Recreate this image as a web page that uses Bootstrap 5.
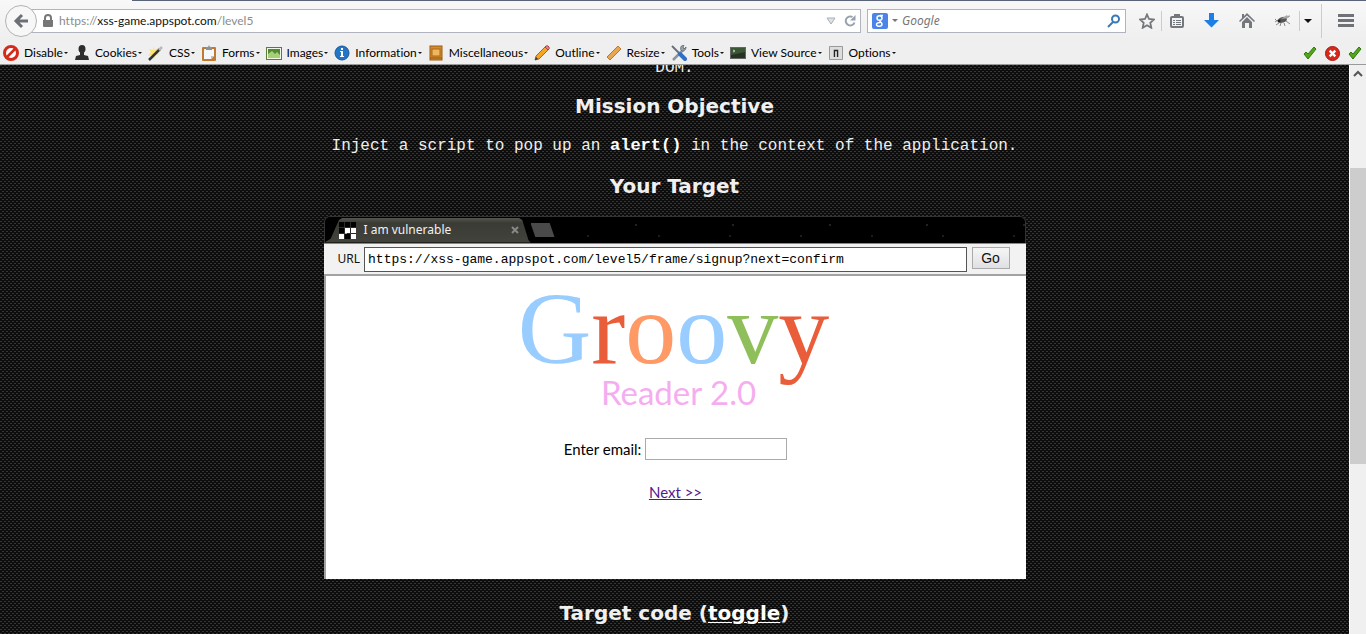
<!DOCTYPE html>
<html lang="en">
<head>
<meta charset="utf-8">
<meta name="viewport" content="width=device-width, initial-scale=1">
<title>XSS game: Level 5</title>
<link href="https://cdn.jsdelivr.net/npm/bootstrap@5.3.0/dist/css/bootstrap.min.css" rel="stylesheet">
<style>
  body { font: 12px/16px "Noto Sans", "Open Sans", sans-serif; color: #111; overflow: hidden; font-variant-ligatures: none; }
  button { font: inherit; color: inherit; }
  svg { display: block; flex: none; }
  .chrome { background: linear-gradient(#f8f8f8, #efefef 60%); border-bottom: 1px solid #9a9a9a; }
  .tab-edge { height: 1px; background: #5b6379; margin-left: 132px; }
  .nav-row { height: 39px; padding-right: 12px; }
  .back-btn { width: 32px; height: 32px; margin-left: 5px; border: 1px solid #b3b3b3; border-radius: 50%; background: #f7f7f7; z-index: 1; }
  .field-box { height: 24px; background: #fff; border: 1px solid #b0b4be; }
  .address { margin-left: -6px; padding-left: 11px; padding-right: 4px; color: #8c8c8c; }
  .address span { font-family: Lato, sans-serif; padding-left: 6px; }
  .address b { font-weight: 400; color: #111; }
  .finder { width: 259px; margin-left: 6px; padding: 0 4px; }
  .finder input { font-style: italic; min-width: 0; outline: 0; }
  .finder input::placeholder { color: #777; }
  .plain { border: 0; background: none; padding: 0; }
  .tools { gap: 20px; margin-left: 13px; }
  .rule { width: 1px; height: 20px; background: #ccc; }
  .rule.tall { height: 34px; }
  .dev-row { height: 24px; padding: 2px 0 0 3px; font-family: Lato, sans-serif; color: #000; }
  .dev-row button { gap: 5px; margin-right: 6px; white-space: nowrap; }
  .drop { display: inline-block; border: 2px solid transparent; border-top-color: #111; border-bottom: 0; margin-left: 1px; vertical-align: 3px; }
  .drop.big { border-width: 4px 4px 0; margin: 0; }
  .drop.soft { border-width: 3px 3px 0; border-top-color: #777; }

  .game { min-height: 0; overflow: hidden; color: #f0f0f0; font: 16px/20px "Liberation Mono", monospace;
    background: #0d0d0d url("data:image/svg+xml,%3Csvg xmlns='http://www.w3.org/2000/svg' width='4' height='4'%3E%3Cpath fill='%23363636' d='M0 0h2v1H0zM2 2h2v1H2z'/%3E%3C/svg%3E"); }
  .game p { margin: 0 0 18px; }
  .game p.cut { margin: -7px 0 16px; }
  .game h2 { font: 700 20px/24px "DejaVu Sans", sans-serif; margin: 0 0 18px; }
  .game h2 a { color: #fff; text-underline-offset: 2px; text-decoration-thickness: 1px; }
  .game p b { font-size: 17px; color: #fff; }
  .frame-box { width: 702px; max-width: 100%; margin-bottom: 18px; color: #111; font: 12px/16px "Noto Sans", sans-serif; }
  .tab-strip { height: 27px; border: 1px solid #333; border-bottom: 0; border-radius: 6px 6px 0 0;
    background: radial-gradient(circle at 20px 8px, #222 1px, transparent 1px) 0 0/97px 27px, radial-gradient(circle at 50px 19px, #1c1c1c 1px, transparent 1px) 0 0/71px 27px, #000; }
  .tab-live { width: 206px; height: 25px; padding: 0 12px 0 14px; color: #f2f2f2; background: linear-gradient(#565650, #3b3b35 20%, #43433d);
    clip-path: polygon(0 100%, 3% 85%, 7% 10%, 9% 0, 94% 0, 96% 10%, 99% 90%, 100% 100%); }
  .tab-new { width: 24px; height: 14px; background: #4a4a4a; clip-path: polygon(0 0, 80% 0, 100% 100%, 20% 100%); }
  .url-row { height: 33px; background: #f2f2f2; border-top: 1px solid #888; border-bottom: 2px solid #a2a2a2; padding: 3px 16px 0 14px; }
  .url-row input { height: 25px; border: 1px solid #555; padding: 0 3px; margin: 0 5px 0 4px; font: 13px "Liberation Mono", monospace; min-width: 0; }
  .go-btn { width: 38px; height: 22px; border: 1px solid #aaa; background: linear-gradient(#f6f6f6, #e0e0e4); font: 14px "Liberation Sans", sans-serif; }
  .reader { height: 303px; background: #fff; border-left: 2px solid #a2a2a2; font: 15px/20px Lato, sans-serif; color: #000; }
  .groovy { font: 102px/100px "Liberation Serif", serif; margin: 0; padding: 3px 4px 0 0; color: #99ccff; }
  .red { color: #e95d3a; } .orange { color: #ff9966; } .green { color: #8fbf5a; }
  .edition { font: 33px/36px Lato, sans-serif; color: #f5adf0; margin-top: -5px; padding-left: 6px; }
  .reader input { width: 142px; height: 22px; border: 1px solid #aaa; }
  .next-link { padding-top: 22px; }
  .reader a { color: #551a8b; }
  .scroller { width: 17px; background: #f0f0f0; border-left: 1px solid #fff; }
  .thumb { height: 52%; margin-top: 86px; background: #cdcdcd; }
</style>
</head>
<body class="vh-100 d-flex flex-column">
<header class="chrome">
  <div class="tab-edge"></div>
  <div class="nav-row d-flex align-items-center">
    <button class="back-btn d-flex align-items-center justify-content-center p-0" aria-label="Back">
      <svg width="16" height="16" viewBox="0 0 16 16" fill="none" stroke="#6c7076" stroke-width="3"><path d="M15 8H3M9 2L3 8l6 6"/></svg>
    </button>
    <div class="field-box address flex-grow-1 d-flex align-items-center">
      <svg width="10" height="13" viewBox="0 0 10 13" fill="#777"><path d="M0 6h10v6a1 1 0 0 1-1 1H1a1 1 0 0 1-1-1z"/><path d="M2 7V4a3 3 0 0 1 6 0v3" fill="none" stroke="#777" stroke-width="2"/></svg>
      <span class="flex-grow-1 text-truncate">https://<b>xss-game.appspot.com</b>/level5</span>
      <svg width="10" height="8" viewBox="0 0 10 8"><path d="M1 1h8L5 7z" fill="#dfe3e8" stroke="#a9afb8"/></svg>
      <button class="plain ms-2" aria-label="Reload"><svg width="12" height="12" viewBox="0 0 12 12"><path d="M10.500 7.500A4.500 4.500 0 1 1 8.500 2" fill="none" stroke="#98a2ae" stroke-width="2"/><path d="M11.500 0v5.500H6z" fill="#98a2ae"/></svg></button>
    </div>
    <div class="field-box finder d-flex align-items-center">
      <svg width="16" height="16" viewBox="0 0 16 16"><rect width="16" height="16" rx="2" fill="#4a84e8"/><g fill="none" stroke="#fff" stroke-width="1.500"><ellipse cx="7.500" cy="5" rx="2.500" ry="2.300"/><path d="M8 2.500h3M8.500 7.500c-2 1 1.500 1.500 1.500 3.500 0 3-5.500 3-5.500 .5 0-2 3-2 4-2"/></g></svg>
      <span class="drop big soft mx-1"></span>
      <input class="plain flex-grow-1" type="text" placeholder="Google" aria-label="Search with Google">
      <button class="plain" aria-label="Search"><svg width="14" height="14" viewBox="0 0 14 14" fill="none" stroke="#3a78b8" stroke-width="2"><circle cx="8.500" cy="5" r="3.500"/><path d="M6 8l-5 5"/></svg></button>
    </div>
    <div class="tools d-flex align-items-center">
      <button class="plain" aria-label="Bookmark"><svg width="16" height="16" viewBox="0 0 16 16"><path d="M8 1.500l2 4.500 5 .5-3.700 3.300 1 5L8 12.300l-4.300 2.500 1-5L1 6.500 6 6z" fill="none" stroke="#74787d" stroke-width="1.800"/></svg></button>
      <button class="plain d-flex align-items-center" style="margin-left:-14px" aria-label="Bookmark list"><span class="rule me-2"></span><svg width="14" height="14" viewBox="0 0 14 14"><rect x="1" y="3" width="12" height="10" rx="1" fill="none" stroke="#74787d" stroke-width="2"/><path d="M4 0h6v4H4zM3 6h2v1H3zM6 6h5v1H6zM3 8h2v1H3zM6 8h5v1H6zM3 10h2v1H3zM6 10h5v1H6z" fill="#74787d"/></svg></button>
      <button class="plain" aria-label="Downloads"><svg width="15" height="15" viewBox="0 0 15 15"><path d="M5 0h5v7h5l-7.500 7.500L0 7h5z" fill="#1c7fe8"/></svg></button>
      <button class="plain" aria-label="Home"><svg width="16" height="15" viewBox="0 0 16 15"><path d="M8 0l8 8-1 1-7-6.500L1 9 0 8l3-3V1h2v2z" fill="#74787d"/><path d="M8 4l5 5v6h-3v-5H6v5H3V9z" fill="#74787d"/></svg></button>
      <button class="plain" aria-label="Firebug"><svg width="16" height="13" viewBox="0 0 16 13"><path d="M2 7L0 5M4 9l-3 2M6 9l-1 3M9 9l1 3M11 7l4 3M10 3l5-1M3 6l-3 2" stroke="#888" fill="none"/><ellipse cx="7.500" cy="6" rx="4.500" ry="2.800" fill="#555" transform="rotate(-18 7 6)"/><path d="M6 5l6-4 2 3z" fill="#aaa"/><circle cx="4" cy="7" r="1.500" fill="#222"/></svg></button>
      <button class="plain d-flex align-items-center" style="margin-left:-12px" aria-label="More"><span class="rule me-1"></span><span class="drop big"></span></button>
      <button class="plain d-flex align-items-center" style="margin-left:-11px" aria-label="Menu"><span class="rule tall me-3"></span><svg width="16" height="13" viewBox="0 0 16 13"><path d="M0 1.500h16M0 6.500h16M0 11.500h16" stroke="#6f7378" stroke-width="3"/></svg></button>
    </div>
  </div>
  <nav class="dev-row d-flex align-items-center">
    <button class="plain d-flex align-items-center"><svg width="16" height="16" viewBox="0 0 16 16"><circle cx="8" cy="8" r="6.500" fill="#fff" stroke="#d42a1c" stroke-width="3"/><path d="M4 12l8-8" stroke="#d42a1c" stroke-width="2.500"/></svg><span>Disable<i class="drop"></i></span></button>
    <button class="plain d-flex align-items-center"><svg width="16" height="16" viewBox="0 0 16 16" fill="#2e2e2e"><ellipse cx="8" cy="4" rx="3.500" ry="4"/><path d="M6 7h4v3l4 1 1 4H1l1-4 4-1z"/></svg><span>Cookies<i class="drop"></i></span></button>
    <button class="plain d-flex align-items-center"><svg width="16" height="16" viewBox="0 0 16 16"><path d="M5 1l1 4 4-2-2 4 3 2-4 1-1 4-2-4-4 1 3-4-2-3 4 1z" fill="#ffe26b"/><path d="M1 15L12 4" stroke="#333" stroke-width="2.500"/><path d="M11 5l3-3" stroke="#b9b9b9" stroke-width="2.500"/></svg><span>CSS<i class="drop"></i></span></button>
    <button class="plain d-flex align-items-center"><svg width="16" height="16" viewBox="0 0 16 16"><rect x="1" y="2" width="14" height="14" rx="1" fill="#c37a2e"/><path d="M3 4h10v7l-3 3H3z" fill="#f5f8fc"/><path d="M10 14v-3h3z" fill="#b6c3d2"/><path d="M5 5V2h2l1-2 1 2h2v3z" fill="#8b929c"/></svg><span>Forms<i class="drop"></i></span></button>
    <button class="plain d-flex align-items-center"><svg width="16" height="16" viewBox="0 0 16 16"><rect x=".5" y="2.500" width="15" height="12" fill="#f2f6e8" stroke="#5c7a3c"/><path d="M2 4h12v9H2z" fill="#4f8a34"/><path d="M2 9l4-3 3 3 2-2 3 3v3H2z" fill="#a8cf76"/></svg><span>Images<i class="drop"></i></span></button>
    <button class="plain d-flex align-items-center"><svg width="16" height="16" viewBox="0 0 16 16"><circle cx="8" cy="8" r="7" fill="#2475c4" stroke="#17599c"/><path d="M7 3h2v2H7zM6 6h3v5h1v1H6v-1h1V7H6z" fill="#fff"/></svg><span>Information<i class="drop"></i></span></button>
    <button class="plain d-flex align-items-center"><svg width="16" height="16" viewBox="0 0 16 16"><rect x="2" y="1" width="12" height="14" fill="#d78a2b" stroke="#9c5c12"/><rect x="4" y="4" width="8" height="7" fill="#efb660" stroke="#a8691c"/><path d="M2 13h12" stroke="#8f5410"/></svg><span>Miscellaneous<i class="drop"></i></span></button>
    <button class="plain d-flex align-items-center"><svg width="16" height="16" viewBox="0 0 16 16"><path d="M1 15l1-4 9-9 3 3-9 9z" fill="#f4a623" stroke="#b5651d"/><path d="M11 2l1-1q2-1 3 1t-1 3z" fill="#e58585" stroke="#a44"/><path d="M1 15l1-3 2 2z" fill="#333"/></svg><span>Outline<i class="drop"></i></span></button>
    <button class="plain d-flex align-items-center"><svg width="16" height="16" viewBox="0 0 16 16"><path d="M1 12L12 1l3 3L4 15z" fill="#e8a552" stroke="#b97a30"/></svg><span>Resize<i class="drop"></i></span></button>
    <button class="plain d-flex align-items-center"><svg width="16" height="16" viewBox="0 0 16 16" fill="none"><path d="M2 15L12 5" stroke="#8b949e" stroke-width="2.500"/><path d="M15 2l-2 2-1-2 1-2c-3 0-4 3-3 5s5 1 5-3z" fill="#9aa4ae" stroke="#66707a"/><path d="M1 1l7 7" stroke="#68717a" stroke-width="2"/><path d="M9 9l5 5" stroke="#2f6fc4" stroke-width="4" stroke-linecap="round"/></svg><span>Tools<i class="drop"></i></span></button>
    <button class="plain d-flex align-items-center"><svg width="16" height="16" viewBox="0 0 16 16"><rect x=".5" y="2.500" width="15" height="11" fill="#243420" stroke="#666"/><path d="M1 3h14v4L1 10z" fill="#3e5638"/><path d="M3 5l2 1-2 1" stroke="#b7d7a8" fill="none"/></svg><span>View Source<i class="drop"></i></span></button>
    <button class="plain d-flex align-items-center"><svg width="16" height="16" viewBox="0 0 16 16"><path d="M1.500 1.500h13v13h-13z" fill="#ddd" stroke="#999"/><path d="M6.500 12V5.500h3V12" fill="#fff" stroke="#222" stroke-width="1.500"/></svg><span>Options<i class="drop"></i></span></button>
    <span class="ms-auto d-flex gap-2 pe-1">
      <svg width="14" height="14" viewBox="0 0 14 14"><path d="M1 8l2-2 2 2 6-7 2 2-8 10z" fill="#54a51c" stroke="#2f7a0a"/></svg>
      <svg width="15" height="15" viewBox="0 0 16 16"><circle cx="8" cy="8" r="7.500" fill="#d8281c" stroke="#a8150c"/><path d="M5 5l6 6M11 5l-6 6" stroke="#fff" stroke-width="2.500"/></svg>
      <svg width="14" height="14" viewBox="0 0 14 14"><path d="M1 8l2-2 2 2 6-7 2 2-8 10z" fill="#54a51c" stroke="#2f7a0a"/></svg>
    </span>
  </nav>
</header>
<div class="d-flex flex-grow-1 overflow-hidden">
  <main class="game flex-grow-1 d-flex flex-column align-items-center text-center">
    <p class="cut">DOM.</p>
    <h2>Mission Objective</h2>
    <p>Inject a script to pop up an <b>alert()</b> in the context of the application.</p>
    <h2>Your Target</h2>
    <section class="frame-box flex-shrink-0">
      <div class="tab-strip d-flex align-items-center">
        <div class="tab-live d-flex align-items-center">
          <svg width="17" height="17" viewBox="0 0 17 17"><path fill="#000" d="M0 0h17v17H0z"/><path fill="#fff" d="M6 6h5v5H6zM12 6h5v5h-5zM0 12h5v5H0zM12 12h5v5h-5z"/><path fill="#fff" d="M6 9h2v3H6z"/><path stroke="#555" d="M5.500 0v17M11.500 0v17M0 5.500h17M0 11.500h17" stroke-width=".5"/></svg>
          <span class="ps-2">I am vulnerable</span>
          <svg class="ms-auto" width="8" height="8" viewBox="0 0 8 8"><path d="M1 1l6 6M7 1L1 7" stroke="#888" stroke-width="2"/></svg>
        </div>
        <div class="tab-new"></div>
      </div>
      <form class="url-row d-flex align-items-start">
        <label for="url" class="pt-1">URL</label>
        <input id="url" class="flex-grow-1" type="text" value="https://xss-game.appspot.com/level5/frame/signup?next=confirm">
        <button type="button" class="go-btn p-0">Go</button>
      </form>
      <div class="reader">
        <h1 class="groovy">G<span class="red">r</span><span class="orange">o</span>o<span class="green">v</span><span class="red">y</span></h1>
        <div class="edition">Reader 2.0</div>
        <form class="pt-4 mt-1">
          <label for="email">Enter email:</label>
          <input id="email" type="text">
          <div class="next-link"><a href="#">Next &gt;&gt;</a></div>
        </form>
      </div>
    </section>
    <h2 class="mt-1">Target code (<a href="#">toggle</a>)</h2>
  </main>
  <aside class="scroller flex-shrink-0">
    <svg width="16" height="17" viewBox="0 0 16 17"><path d="M4 11l4-4 4 4" fill="none" stroke="#555" stroke-width="2"/></svg>
    <div class="thumb"></div>
  </aside>
</div>
<script src="https://cdn.jsdelivr.net/npm/bootstrap@5.3.0/dist/js/bootstrap.bundle.min.js"></script>
</body>
</html>
